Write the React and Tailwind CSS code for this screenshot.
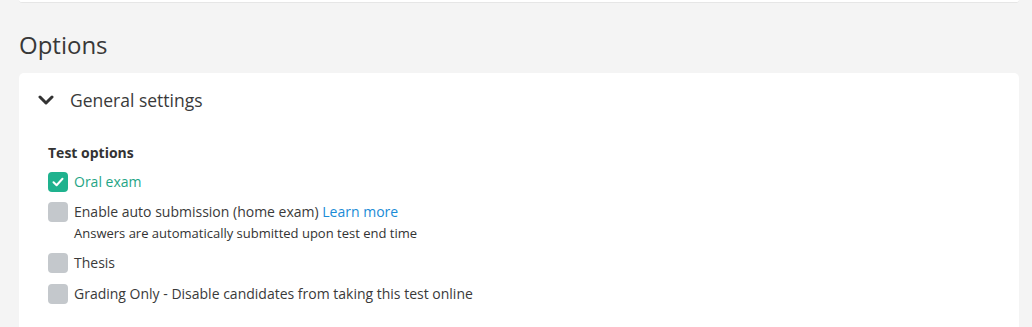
import React from "react";

function Check({ checked }) {
  return (
    <span
      className={
        "flex h-[20px] w-[20px] shrink-0 items-center justify-center rounded-[4px] " +
        (checked ? "bg-[#1fb28e]" : "bg-[#c4c8cc]")
      }
    >
      {checked && (
        <svg width="12" height="10" viewBox="0 0 12 10" fill="none">
          <path d="M1.5 5.2 L4.6 8.2 L10.5 1.8" stroke="white" strokeWidth="2" strokeLinecap="round" strokeLinejoin="round" />
        </svg>
      )}
    </span>
  );
}

export default function App() {
  return (
    <div
      className="min-h-[327px] w-[1032px] overflow-hidden bg-[#f4f4f4] text-[#333333]"
      style={{ fontFamily: '"Open Sans", "Noto Sans", sans-serif' }}
    >
      <div className="ml-[19px] mr-[13px] h-[3px] rounded-b-[4px] border-b border-[#e6e6e6] bg-white" />
      <h2 className="ml-[19px] mt-[26px] h-[32px] text-[24px] leading-[32px] font-normal text-[#383838]">
        Options
      </h2>
      <div className="ml-[19px] mr-[13px] mt-[12px] h-[260px] rounded-t-[5px] bg-white">
        <div className="flex h-[54px] items-center pl-[19px]">
          <svg width="16" height="10" viewBox="0 0 16 10" fill="none">
            <path d="M2 2 L8 8 L14 2" stroke="#333333" strokeWidth="3" strokeLinecap="round" strokeLinejoin="round" />
          </svg>
          <span className="ml-[16px] text-[17.5px] leading-[24px] text-[#3a3a3a]">General settings</span>
        </div>
        <div className="pl-[29px] pt-[16px]">
          <div className="h-[20px] text-[14px] font-bold leading-[20px] text-[#333333]">Test options</div>
          <div className="mt-[9px] flex h-[20px] items-center gap-[6px]">
            <Check checked />
            <span className="text-[14px] leading-[20px] text-[#1fa585]">Oral exam</span>
          </div>
          <div className="mt-[10px] flex h-[20px] items-center gap-[6px]">
            <Check />
            <span className="text-[14px] leading-[20px] text-[#3a3a3a]">
              Enable auto submission (home exam){" "}
              <span className="text-[#1a8bd6]">Learn more</span>
            </span>
          </div>
          <div className="ml-[26px] mt-[3px] h-[16px] text-[13px] leading-[16px] text-[#333333]">
            Answers are automatically submitted upon test end time
          </div>
          <div className="mt-[12px] flex h-[20px] items-center gap-[6px]">
            <Check />
            <span className="text-[14px] leading-[20px] text-[#3a3a3a]">Thesis</span>
          </div>
          <div className="mt-[11px] flex h-[20px] items-center gap-[6px]">
            <Check />
            <span className="text-[14px] leading-[20px] text-[#3a3a3a]">
              Grading Only - Disable candidates from taking this test online
            </span>
          </div>
        </div>
      </div>
    </div>
  );
}
